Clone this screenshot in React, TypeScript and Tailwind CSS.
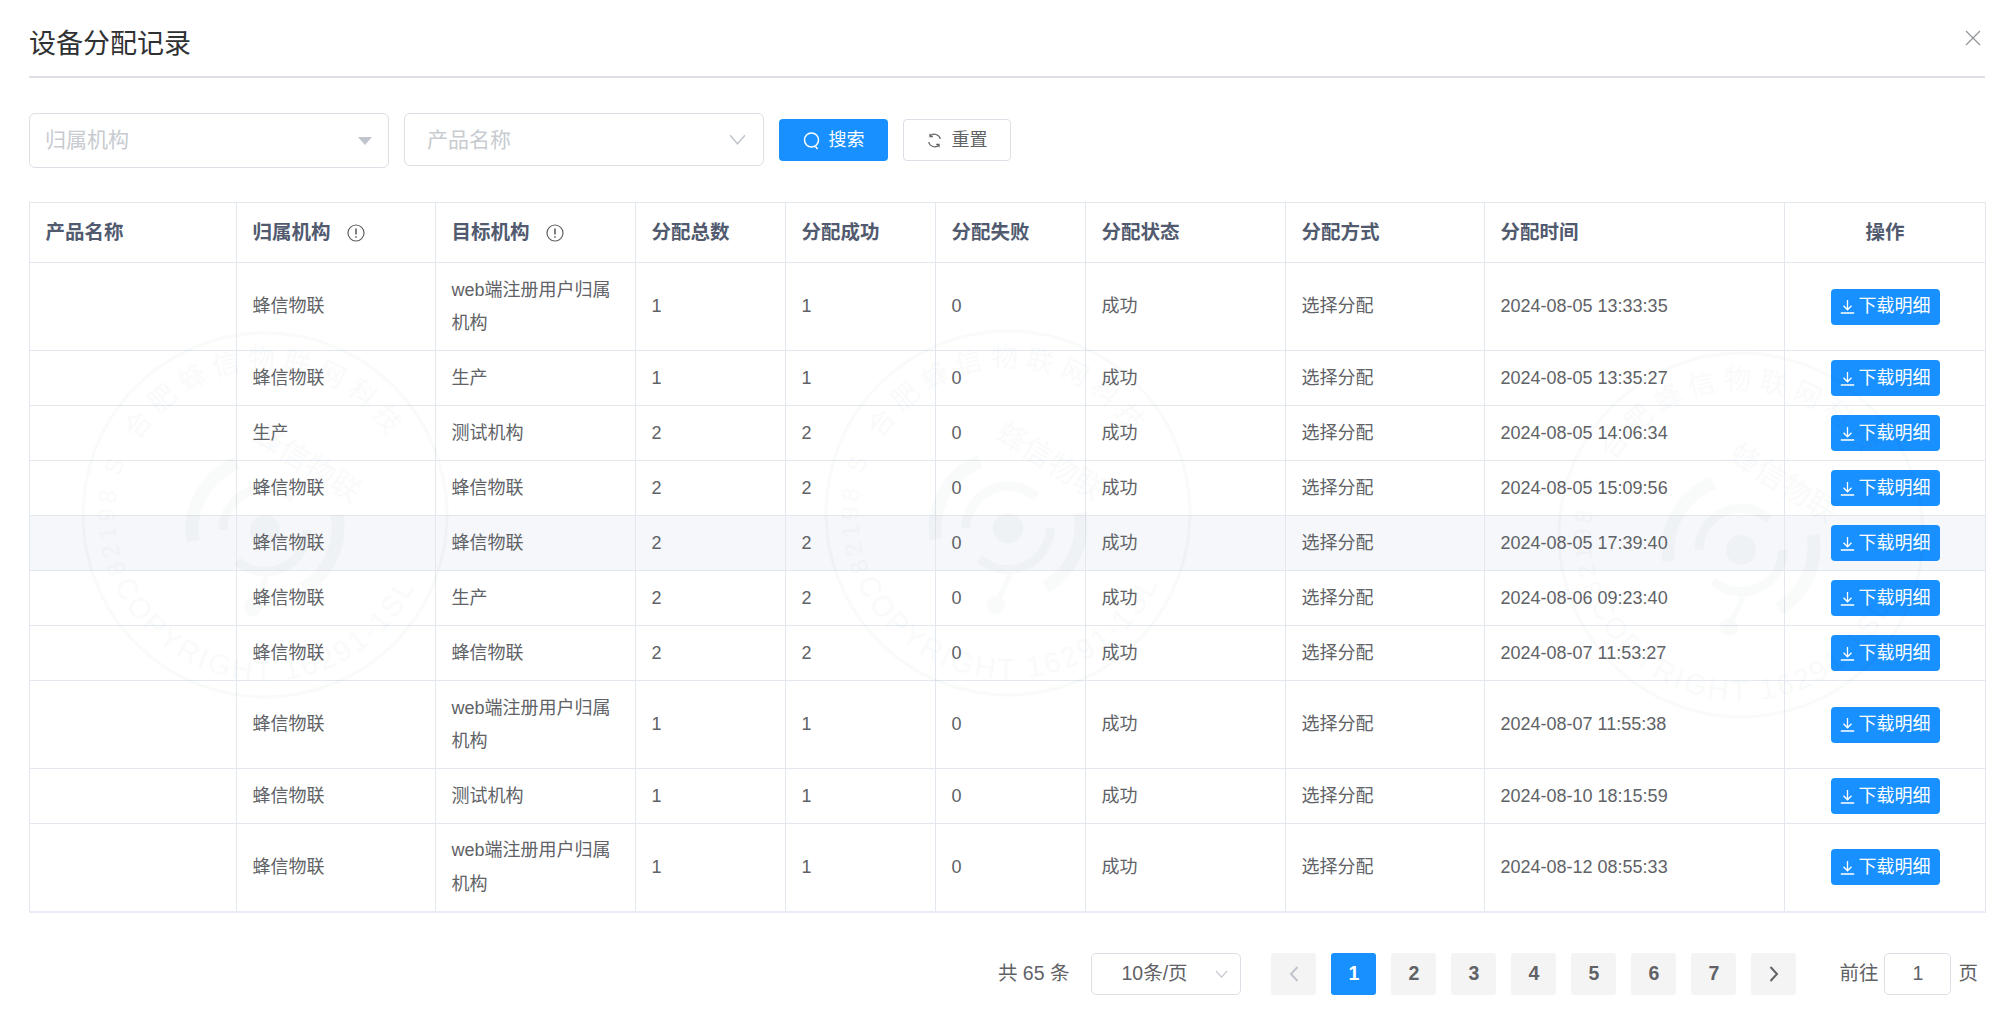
const ROWS = [
  { org: "蜂信物联", target: "web端注册用户归属机构", total: 1, ok: 1, time: "2024-08-05 13:33:35", tall: true },
  { org: "蜂信物联", target: "生产", total: 1, ok: 1, time: "2024-08-05 13:35:27" },
  { org: "生产", target: "测试机构", total: 2, ok: 2, time: "2024-08-05 14:06:34" },
  { org: "蜂信物联", target: "蜂信物联", total: 2, ok: 2, time: "2024-08-05 15:09:56" },
  { org: "蜂信物联", target: "蜂信物联", total: 2, ok: 2, time: "2024-08-05 17:39:40", hover: true },
  { org: "蜂信物联", target: "生产", total: 2, ok: 2, time: "2024-08-06 09:23:40" },
  { org: "蜂信物联", target: "蜂信物联", total: 2, ok: 2, time: "2024-08-07 11:53:27" },
  { org: "蜂信物联", target: "web端注册用户归属机构", total: 1, ok: 1, time: "2024-08-07 11:55:38", tall: true },
  { org: "蜂信物联", target: "测试机构", total: 1, ok: 1, time: "2024-08-10 18:15:59" },
  { org: "蜂信物联", target: "web端注册用户归属机构", total: 1, ok: 1, time: "2024-08-12 08:55:33", tall: true },
];

const COLUMNS = [
  { label: "产品名称", width: "w-[207px]" },
  { label: "归属机构", width: "w-[199px]", info: true },
  { label: "目标机构", width: "w-[200px]", info: true },
  { label: "分配总数", width: "w-[150px]" },
  { label: "分配成功", width: "w-[150px]" },
  { label: "分配失败", width: "w-[150px]" },
  { label: "分配状态", width: "w-[200px]" },
  { label: "分配方式", width: "w-[199px]" },
  { label: "分配时间", width: "w-[300px]" },
  { label: "操作", width: "w-[201px]", center: true },
];

const PAGES = [1, 2, 3, 4, 5, 6, 7];

const cellBorder = "border border-[#e3e8ef]";

function InfoIcon() {
  return (
    <svg width="18" height="18" viewBox="0 0 18 18" fill="none" stroke="#606266" strokeWidth="1.2">
      <circle cx="9" cy="9" r="8" />
      <path d="M9 4.5v6" strokeWidth="1.6" />
      <path d="M9 12.2v1.6" strokeWidth="1.6" />
    </svg>
  );
}

function DownloadIcon() {
  return (
    <svg width="15" height="15" viewBox="0 0 15 15" fill="none" stroke="currentColor" strokeWidth="1.3">
      <path d="M7.5 1v9.5M3.5 6.8l4 4 4-4M.8 14h13.4" />
    </svg>
  );
}

function SearchIcon() {
  return (
    <svg width="17" height="18" viewBox="0 0 17 18" fill="none" stroke="currentColor" strokeWidth="1.5">
      <circle cx="8.5" cy="8" r="7" />
      <path d="M12.5 14.5l2 2.5" />
    </svg>
  );
}

function RefreshIcon() {
  return (
    <svg width="15" height="15" viewBox="0 0 15 15" fill="none" stroke="#606266" strokeWidth="1.2">
      <path d="M13.3 6A6 6 0 0 0 3 3.2" />
      <path d="M1.7 9A6 6 0 0 0 12 11.8" />
      <path d="M3 .8v2.8h2.8M12 14.2v-2.8H9.2" />
    </svg>
  );
}

function Chevron({ className }: { className: string }) {
  return (
    <svg className={className} viewBox="0 0 16 10" fill="none" stroke="currentColor" strokeWidth="1.4">
      <path d="M1 1l7 8 7-8" />
    </svg>
  );
}

function Stamp({ id, className }: { id: string; className: string }) {
  return (
    <svg
      className={`pointer-events-none absolute ${className}`}
      width="380"
      height="380"
      viewBox="0 0 380 380"
      fill="none"
    >
      <defs>
        <path id={`${id}-top`} d="M44 190A146 146 0 0 1 336 190" />
        <path id={`${id}-left`} d="M63 270A150 150 0 0 1 63 110" />
        <path id={`${id}-bottom`} d="M24 190A166 166 0 0 0 356 190" />
      </defs>
      <g opacity="0.02" fill="#1f2a44" stroke="none">
        <circle cx="190" cy="190" r="182" fill="none" stroke="#1f2a44" strokeWidth="3" />
        <text fontSize="27" letterSpacing="7">
          <textPath href={`#${id}-top`} startOffset="50%" textAnchor="middle">
            合肥蜂信物联网科技
          </textPath>
        </text>
        <text fontSize="24" letterSpacing="4">
          <textPath href={`#${id}-left`} startOffset="50%" textAnchor="middle">
            82198 S
          </textPath>
        </text>
        <text fontSize="29" letterSpacing="3">
          <textPath href={`#${id}-bottom`} startOffset="50%" textAnchor="middle">
            COPYRIGHT 16291-1SL
          </textPath>
        </text>
        <text x="232" y="148" fontSize="30" textAnchor="middle" transform="rotate(32 232 138)">
          蜂信物联
        </text>
        <circle cx="190" cy="205" r="15" />
        <circle cx="178" cy="282" r="9" />
        <path d="M178 282l14-30" stroke="#1f2a44" strokeWidth="5" />
        <path d="M148 205a42 42 0 0 1 70-31" stroke="#1f2a44" strokeWidth="9" fill="none" />
        <path d="M232 205a42 42 0 0 1-70 31" stroke="#1f2a44" strokeWidth="9" fill="none" />
        <path d="M118 216a72 72 0 0 1 44-78" stroke="#1f2a44" strokeWidth="13" fill="none" />
        <path d="M262 190a72 72 0 0 1-34 74" stroke="#1f2a44" strokeWidth="13" fill="none" />
      </g>
    </svg>
  );
}

export default function App() {
  return (
    <div className="relative h-[1030px] w-full overflow-hidden bg-white pr-[26px] pl-[29px] font-['Liberation_Sans','Noto_Sans_CJK_SC',sans-serif] text-[#606266]">
      <div className="flex h-[78px] items-center justify-between border-b-2 border-[#dcdfe6] pt-[12px]">
        <h1 className="text-[27px] leading-[40px] font-normal text-[#303133]">设备分配记录</h1>
        <svg className="mr-[4px] mb-[12px] text-[#909399]" width="16" height="16" viewBox="0 0 16 16" stroke="currentColor" strokeWidth="1.2">
          <path d="M1 1l14 14M15 1L1 15" />
        </svg>
      </div>

      <div className="mt-[35px] flex items-start gap-[15px]">
        <div className="flex h-[55px] w-[360px] items-center justify-between rounded-[6px] border border-[#dcdfe6] pr-[16px] pl-[15px] text-[21px] text-[#c8cbd0]">
          <span className="pb-[2px]">归属机构</span>
          <span className="h-0 w-0 border-x-[7px] border-t-[8px] border-x-transparent border-t-[#c0c4cc]" />
        </div>
        <div className="flex h-[53px] w-[360px] items-center justify-between rounded-[6px] border border-[#dcdfe6] pr-[17px] pl-[22px] text-[21px] text-[#c8cbd0]">
          <span>产品名称</span>
          <Chevron className="h-[11px] w-[17px] text-[#c0c4cc]" />
        </div>
        <button type="button" className="mt-[6px] flex h-[42px] w-[109px] items-center justify-center gap-[9px] rounded-[4px] bg-[#1890ff] pt-[1px] text-[18px] text-white">
          <SearchIcon />
          搜索
        </button>
        <button type="button" className="mt-[6px] flex h-[42px] w-[108px] items-center justify-center gap-[10px] rounded-[4px] border border-[#dcdfe6] bg-white text-[18px]">
          <RefreshIcon />
          重置
        </button>
      </div>

      <table className="mt-[34px] w-[1956px] table-fixed border-collapse border-b-2 border-b-[#e8ecf5]">
        <colgroup>
          {COLUMNS.map((col) => (
            <col key={col.label} className={col.width} />
          ))}
        </colgroup>
        <thead>
          <tr className="h-[60px]">
            {COLUMNS.map((col) => (
              <th
                key={col.label}
                className={`${cellBorder} px-[15.5px] text-[19.5px] font-bold text-[#515a6e] ${col.center ? "text-center" : "text-left"}`}
              >
                {col.info ? (
                  <span className="flex items-center gap-[16px]">
                    {col.label}
                    <InfoIcon />
                  </span>
                ) : (
                  col.label
                )}
              </th>
            ))}
          </tr>
        </thead>
        <tbody>
          {ROWS.map((row) => (
            <tr key={row.time} className={`${row.tall ? "h-[88px]" : "h-[55px]"} ${row.hover ? "bg-[#f5f7fa]" : ""}`}>
              <td className={cellBorder} />
              <td className={`${cellBorder} px-[15.5px] pt-[1px] text-[18px] leading-[33.5px]`}>{row.org}</td>
              <td className={`${cellBorder} px-[15.5px] pt-[1px] text-[18px] leading-[33.5px]`}>{row.target}</td>
              <td className={`${cellBorder} px-[15.5px] text-[18px]`}>{row.total}</td>
              <td className={`${cellBorder} px-[15.5px] text-[18px]`}>{row.ok}</td>
              <td className={`${cellBorder} px-[15.5px] text-[18px]`}>0</td>
              <td className={`${cellBorder} px-[15.5px] text-[18px]`}>成功</td>
              <td className={`${cellBorder} px-[15.5px] text-[18px]`}>选择分配</td>
              <td className={`${cellBorder} px-[15.5px] text-[18px]`}>{row.time}</td>
              <td className={`${cellBorder} text-center`}>
                <button type="button" className="inline-flex h-[36px] w-[109px] items-center justify-center gap-[4px] rounded-[4px] bg-[#1890ff] align-middle text-[18px] text-white">
                  <DownloadIcon />
                  下载明细
                </button>
              </td>
            </tr>
          ))}
        </tbody>
      </table>

      <div className="mt-[40px] flex items-center justify-end pr-[7px] text-[19.5px]">
        <span>共 65 条</span>
        <div className="ml-[22px] flex h-[42px] w-[150px] items-center justify-between rounded-[5px] border border-[#dcdfe6] pr-[12px] pl-[29px]">
          <span>10条/页</span>
          <Chevron className="h-[8px] w-[13px] text-[#c0c4cc]" />
        </div>
        <div className="ml-[30px] flex gap-[15px]">
          <span className="flex h-[42px] w-[45px] items-center justify-center rounded-[3px] bg-[#f4f4f5] text-[#c0c4cc]">
            <svg width="10" height="16" viewBox="0 0 10 16" fill="none" stroke="currentColor" strokeWidth="2">
              <path d="M8.5 1L2 8l6.5 7" />
            </svg>
          </span>
          {PAGES.map((page) => (
            <span
              key={page}
              className={`flex h-[42px] w-[45px] items-center justify-center rounded-[3px] font-bold ${page === 1 ? "bg-[#1890ff] text-white" : "bg-[#f4f4f5]"}`}
            >
              {page}
            </span>
          ))}
          <span className="flex h-[42px] w-[45px] items-center justify-center rounded-[3px] bg-[#f4f4f5]">
            <svg width="10" height="16" viewBox="0 0 10 16" fill="none" stroke="currentColor" strokeWidth="2">
              <path d="M1.5 1L8 8l-6.5 7" />
            </svg>
          </span>
        </div>
        <span className="ml-[43px]">前往</span>
        <span className="ml-[6px] flex h-[42px] w-[67px] items-center justify-center rounded-[5px] border border-[#dcdfe6]">1</span>
        <span className="ml-[7px]">页</span>
      </div>

      <Stamp id="stamp-a" className="top-[325px] left-[75px]" />
      <Stamp id="stamp-b" className="top-[323px] left-[818px]" />
      <Stamp id="stamp-c" className="top-[345px] left-[1551px]" />
    </div>
  );
}
